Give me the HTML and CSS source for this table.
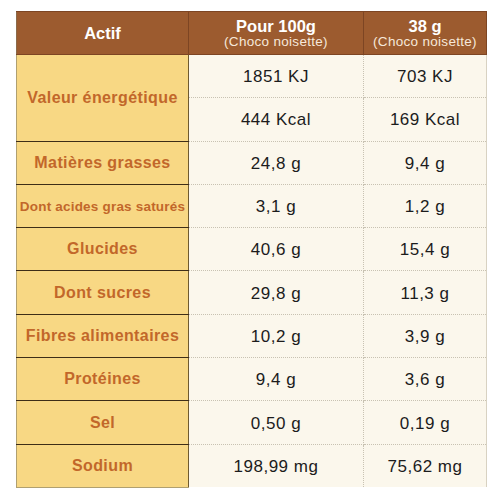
FILE: index.html
```html
<!DOCTYPE html>
<html>
<head>
<meta charset="utf-8">
<link rel="stylesheet" href="styles.css">
</head>
<body>
<table class="nutri">
  <colgroup><col class="c1"><col class="c2"><col class="c3"></colgroup>
  <thead>
    <tr>
      <th class="h">Actif</th>
      <th class="h"><span class="ttl">Pour 100g</span><span class="sub">(Choco noisette)</span></th>
      <th class="h"><span class="ttl">38 g</span><span class="sub">(Choco noisette)</span></th>
    </tr>
  </thead>
  <tbody>
    <tr class="half"><td class="lab" rowspan="2">Valeur énergétique</td><td class="v">1851 KJ</td><td class="v">703 KJ</td></tr>
    <tr class="half"><td class="v">444 Kcal</td><td class="v">169 Kcal</td></tr>
    <tr><td class="lab">Matières grasses</td><td class="v">24,8 g</td><td class="v">9,4 g</td></tr>
    <tr><td class="lab small">Dont acides gras saturés</td><td class="v">3,1 g</td><td class="v">1,2 g</td></tr>
    <tr><td class="lab">Glucides</td><td class="v">40,6 g</td><td class="v">15,4 g</td></tr>
    <tr><td class="lab">Dont sucres</td><td class="v">29,8 g</td><td class="v">11,3 g</td></tr>
    <tr><td class="lab">Fibres alimentaires</td><td class="v">10,2 g</td><td class="v">3,9 g</td></tr>
    <tr><td class="lab">Protéines</td><td class="v">9,4 g</td><td class="v">3,6 g</td></tr>
    <tr><td class="lab">Sel</td><td class="v">0,50 g</td><td class="v">0,19 g</td></tr>
    <tr><td class="lab">Sodium</td><td class="v">198,99 mg</td><td class="v">75,62 mg</td></tr>
  </tbody>
</table>
</body>
</html>
```
FILE: styles.css
```css
html, body {
  margin: 0;
  padding: 0;
  background: #ffffff;
}
body {
  padding: 11px 0 0 16px;
  font-family: "Liberation Sans", Arial, sans-serif;
}
.nutri {
  border-collapse: collapse;
  table-layout: fixed;
  width: 470px;
}
.c1 { width: 172px; }
.c2 { width: 175px; }
.c3 { width: 123px; }
.nutri thead tr { height: 43px; }
.nutri tbody tr { height: 43.3px; }
.h {
  background: #9c5b2f;
  color: #ffffff;
  font-weight: bold;
  font-size: 16.5px;
  line-height: 19px;
  padding: 1px 0 0;
  text-align: center;
  vertical-align: middle;
  border: 1px solid #7d4523;
  border-left: 1px solid #4e2a12;
}
.h:first-child { border-left: 1px solid #8a6a4a; }
.ttl {
  display: block;
  line-height: 17px;
}
.sub {
  display: block;
  font-weight: normal;
  font-size: 13.5px;
  line-height: 14px;
  color: #f6e8da;
  letter-spacing: 0.3px;
}
.lab {
  background: #f8d884;
  color: #c2672a;
  font-weight: bold;
  font-size: 16px;
  letter-spacing: 0.4px;
  text-align: center;
  padding: 0;
  border-top: 1px solid #3e2d17;
  border-bottom: 1px solid #3e2d17;
  border-left: 1px solid #b0a070;
  border-right: 1px solid #6f5a30;
}
.nutri tbody tr:last-child .lab { border-bottom: 1px solid #b0a070; }
.lab.small { font-size: 13.5px; letter-spacing: 0.2px; }
.v {
  background: #fbf7ec;
  color: #1c1c1c;
  font-size: 17px;
  letter-spacing: 0.5px;
  text-align: center;
  padding: 2px 0 0;
  border: 1px dotted #c8c2b2;
}
.v:last-child { border-right: 1px solid #d8d2c2; }
.nutri tbody tr:last-child .v { border-bottom: none; }
```
